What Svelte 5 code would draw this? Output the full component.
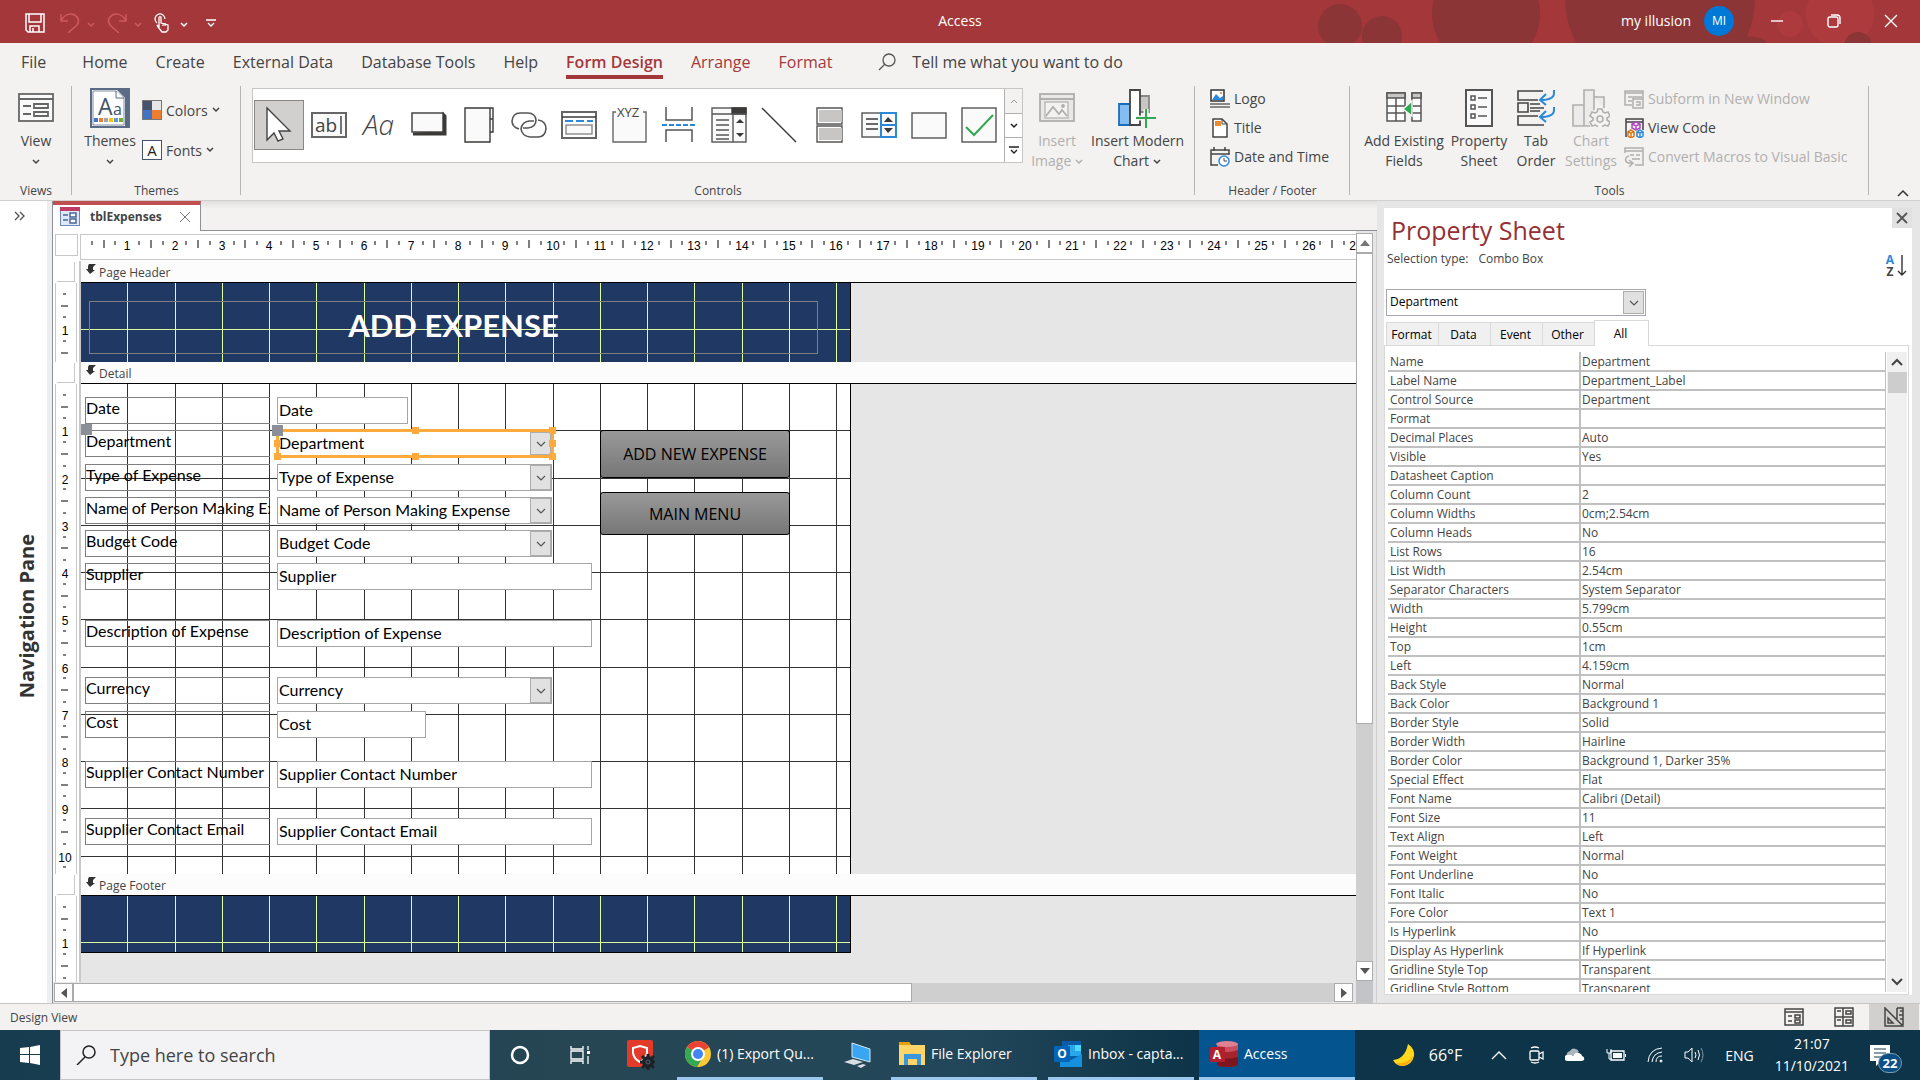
<script>
  // form designer scale: four centimetres take 189 pixels
  const cm = (n) => Math.round((n * 189) / 4) - 1;

  const menuTabs = ['Home', 'Create', 'External Data', 'Database Tools', 'Help'];
  const contextTabs = ['Form Design', 'Arrange', 'Format'];
  const gallery = [
    'select', 'textbox', 'label', 'button', 'tab', 'link', 'navigation', 'group',
    'pagebreak', 'combo', 'line', 'toggle', 'list', 'rect', 'check'
  ];

  const fields = [
    { name: 'Date', y: 13, w: 131 },
    { name: 'Department', y: 46, w: 276, combo: true, selected: true },
    { name: 'Type of Expense', y: 80, w: 275, combo: true },
    { name: 'Name of Person Making Expense', y: 113, w: 275, combo: true },
    { name: 'Budget Code', y: 146, w: 275, combo: true },
    { name: 'Supplier', y: 179, w: 315 },
    { name: 'Description of Expense', y: 236, w: 315 },
    { name: 'Currency', y: 293, w: 275, combo: true },
    { name: 'Cost', y: 327, w: 149 },
    { name: 'Supplier Contact Number', y: 377, w: 315 },
    { name: 'Supplier Contact Email', y: 434, w: 315 }
  ];

  const sheetTabs = ['Format', 'Data', 'Event', 'Other', 'All'];
  const properties = [
    ['Name', 'Department'],
    ['Label Name', 'Department_Label'],
    ['Control Source', 'Department'],
    ['Format', ''],
    ['Decimal Places', 'Auto'],
    ['Visible', 'Yes'],
    ['Datasheet Caption', ''],
    ['Column Count', '2'],
    ['Column Widths', '0cm;2.54cm'],
    ['Column Heads', 'No'],
    ['List Rows', '16'],
    ['List Width', '2.54cm'],
    ['Separator Characters', 'System Separator'],
    ['Width', '5.799cm'],
    ['Height', '0.55cm'],
    ['Top', '1cm'],
    ['Left', '4.159cm'],
    ['Back Style', 'Normal'],
    ['Back Color', 'Background 1'],
    ['Border Style', 'Solid'],
    ['Border Width', 'Hairline'],
    ['Border Color', 'Background 1, Darker 35%'],
    ['Special Effect', 'Flat'],
    ['Font Name', 'Calibri (Detail)'],
    ['Font Size', '11'],
    ['Text Align', 'Left'],
    ['Font Weight', 'Normal'],
    ['Font Underline', 'No'],
    ['Font Italic', 'No'],
    ['Fore Color', 'Text 1'],
    ['Is Hyperlink', 'No'],
    ['Display As Hyperlink', 'If Hyperlink'],
    ['Gridline Style Top', 'Transparent'],
    ['Gridline Style Bottom', 'Transparent']
  ];

  let activeTab = $state('All');

  const range = (n) => Array.from({ length: n }, (_, i) => i);
</script>

{#snippet chevron()}
  <svg class="chev" width="8" height="6" viewBox="0 0 8 6"><path d="M1 1l3 3 3-3" fill="none" stroke="currentColor" stroke-width="1.5" /></svg>
{/snippet}

{#snippet comboArrow()}
  <svg width="10" height="6" viewBox="0 0 10 6"><path d="M1 1l4 4 4-4" fill="none" stroke="#555" stroke-width="1.2" /></svg>
{/snippet}

{#snippet controlIcon(name)}
  <svg width="38" height="40" viewBox="0 0 38 40" fill="none" stroke="#3b3a39" stroke-width="1.4">
    {#if name === 'select'}
      <path d="M7 3v32l7-7 4 8 5-2-4-8h11z" fill="#fff" stroke="#444" />
    {:else if name === 'textbox'}
      <rect x="2" y="8" width="34" height="24" fill="#fafafa" stroke="#666" stroke-width="2" />
      <text x="5" y="27" class="glyph">ab</text><path d="M31 11v18" />
    {:else if name === 'label'}
      <text x="3" y="30" class="glyph italic">Aa</text>
    {:else if name === 'button'}
      <path d="M3 29h32V11l-1-1v18z" fill="#3b3a39" stroke-width="3" />
      <rect x="2" y="8" width="31" height="19" fill="#fafafa" />
    {:else if name === 'tab'}
      <path d="M5 3h28v24h-3v10H5zM30 3v24M30 14h3" fill="#fafafa" />
    {:else if name === 'link'}
      <g stroke="#555" stroke-width="1.6">
        <path d="M9 24q-7-2-7-8 1-8 8-8h8q7 0 8 7 0 7-8 8h-5" />
        <path d="M28 15q8 1 8 9-1 8-8 8h-8q-8-1-9-8 1-7 8-8h5" />
      </g>
    {:else if name === 'navigation'}
      <rect x="2" y="7" width="34" height="26" stroke="#666" stroke-width="2" />
      <path d="M2 12h34" /><path d="M5 16h28" stroke="#2b88d8" stroke-width="2" stroke-dasharray="8 3" />
      <rect x="6" y="20" width="26" height="9" stroke="#888" fill="#fafafa" />
    {:else if name === 'group'}
      <path d="M6 7H3v30h33V7h-3" stroke="#666" fill="#fafafa" />
      <text x="7" y="12" class="glyph small">XYZ</text>
    {:else if name === 'pagebreak'}
      <path d="M6 2v13h26V2M6 37V25h26v12" stroke="#555" stroke-width="1.5" />
      <path d="M2 20h34" stroke="#2b88d8" stroke-width="2" stroke-dasharray="5 2" />
    {:else if name === 'combo'}
      <rect x="2" y="3" width="34" height="34" fill="#fafafa" stroke="#555" />
      <path d="M22 3h14v6H22z" fill="#3b3a39" /><path d="M2 9h34M23 9v28M6 15h13M6 20h13M6 25h13M6 30h13M6 34h13" stroke="#555" />
      <path d="M26 18l4-4 4 4zM26 28l4 4 4-4z" fill="#3b3a39" stroke="none" />
    {:else if name === 'line'}
      <path d="M2 3l34 34" />
    {:else if name === 'toggle'}
      <path d="M7 3h25v16H7zM7 21h25v16H7z" fill="#fff" stroke="#555" /><path d="M9 5h23v12H9zM9 23h23v12H9z" fill="#c8c6c4" stroke="none" />
    {:else if name === 'list'}
      <rect x="2" y="8" width="34" height="24" fill="#fafafa" stroke="#555" />
      <path d="M6 14h12M6 19h12M6 24h12" /><path d="M21 8h15v24H21zM21 20h15" stroke="#2b88d8" stroke-width="2" />
      <path d="M24 17l4-5 5 5zM24 23l4 5 5-5z" fill="#3b3a39" stroke="none" />
    {:else if name === 'rect'}
      <rect x="2" y="8" width="34" height="25" fill="#fafafa" stroke="#555" />
    {:else if name === 'check'}
      <rect x="2" y="3" width="34" height="34" fill="#fafafa" stroke="#555" />
      <path d="M6 22l8 8 19-20" stroke="#31a952" stroke-width="2" />
    {/if}
  </svg>
{/snippet}

{#snippet hTicks()}
  <svg class="hticks" width="100%" height="24">
    {#each range(28) as i}
      <path d="M{cm(i + 0.25)} 6v4M{cm(i + 0.5)} 5v8M{cm(i + 0.75)} 6v4" stroke="#000" />
      {#if i > 0}<text x={cm(i)} y="15" text-anchor="middle">{i}</text>{/if}
    {/each}
  </svg>
{/snippet}

{#snippet vTicks(count)}
  <svg class="vticks" width="22" height="100%">
    {#each range(count) as i}
      <path d="M7 {cm(i + 0.25)}h3M5 {cm(i + 0.5)}h7M7 {cm(i + 0.75)}h3" stroke="#000" />
      {#if i > 0}<text x="9" y={cm(i) + 6} text-anchor="middle">{i}</text>{/if}
    {/each}
  </svg>
{/snippet}

{#snippet grid()}
  <svg class="grid" width="100%" height="100%" shape-rendering="crispEdges">
    {#each range(16) as i}
      <path d="M{cm(i + 1)} 0v600" stroke="currentColor" />
    {/each}
    {#each range(10) as i}
      <path d="M0 {cm(i + 1)}h900" stroke="currentColor" />
    {/each}
  </svg>
{/snippet}

{#snippet sectionBar(title)}
  <div class="bar">
    <div class="bar-gutter"><span class="bar-box"></span></div>
    <div class="bar-title">
      <svg width="10" height="10" viewBox="0 0 10 10"><path d="M3 0h7L7 3v3h2L4 10 0 5h2V2z" fill="#333" /></svg>
      {title}
    </div>
  </div>
{/snippet}

<div class="app">
  <header class="titlebar">
    <svg class="art" width="640" height="43" viewBox="0 0 640 43" aria-hidden="true">
      <g fill="#8b3537">
        <circle cx="60" cy="26" r="22" /><circle cx="102" cy="36" r="20" /><circle cx="206" cy="14" r="54" />
        <circle cx="380" cy="-2" r="95" /><ellipse cx="460" cy="42" rx="26" ry="6" />
      </g>
      <circle cx="560" cy="14" r="34" fill="#ad3a3d" /><circle cx="510" cy="24" r="13" fill="#ad3a3d" />
      <circle cx="578" cy="46" r="14" fill="#8b3537" />
    </svg>
    <div class="quick">
      <button class="q" aria-label="Save">
        <svg width="20" height="20" viewBox="0 0 20 20" fill="none" stroke="#fff" stroke-width="1.5"><path d="M1 1h18v18H3l-2-2zM4 1v8h12V1M5 19v-6h9v6M8 15v4" /></svg>
      </button>
      <button class="q dim" aria-label="Undo">
        <svg width="20" height="20" viewBox="0 0 20 20" fill="none" stroke="currentColor" stroke-width="1.5"><path d="M1 1v7h7M1 8c4-8 12-9 16-4 3 4 1 7-1 9l-8 7" /></svg>
      </button>
      <button class="q dim narrow" aria-label="Undo list">{@render chevron()}</button>
      <button class="q dim" aria-label="Redo">
        <svg width="20" height="20" viewBox="0 0 20 20" fill="none" stroke="currentColor" stroke-width="1.5"><path d="M19 1v7h-7M19 8C15 0 7-1 3 4c-3 4-1 7 1 9l8 7" /></svg>
      </button>
      <button class="q dim narrow" aria-label="Redo list">{@render chevron()}</button>
      <button class="q touch" aria-label="Touch mode">
        <svg width="16" height="20" viewBox="0 0 16 20" fill="none" stroke="#fff" stroke-width="1.3"><path d="M3 10a5 5 0 118-4M5 14V5q0-2 2-1v6l7 2v5l-2 2H8l-4-5-1-2zM9 10v3M11 10v3" /></svg>
      </button>
      <button class="q narrow" aria-label="Mode list">{@render chevron()}</button>
      <button class="q custom" aria-label="Customize toolbar">
        <svg width="10" height="8" viewBox="0 0 10 8" fill="none" stroke="#fff" stroke-width="1.3"><path d="M0 1h10M2 4l3 3 3-3" /></svg>
      </button>
    </div>
    <div class="app-name">Access</div>
    <div class="account">
      <span>my illusion</span>
      <span class="avatar">MI</span>
      <button class="win" aria-label="Minimize"><svg width="14" height="14" viewBox="0 0 14 14"><path d="M1 7h12" stroke="#fff" stroke-width="1.4" /></svg></button>
      <button class="win" aria-label="Restore"><svg width="14" height="14" viewBox="0 0 14 14" fill="none" stroke="#fff" stroke-width="1.4"><rect x="1" y="3" width="10" height="10" rx="2" /><path d="M4 1h6q3 0 3 3v6" /></svg></button>
      <button class="win" aria-label="Close"><svg width="14" height="14" viewBox="0 0 14 14"><path d="M1 1l12 12M13 1L1 13" stroke="#fff" stroke-width="1.4" /></svg></button>
    </div>
  </header>

  <nav class="menu">
    <button class="file"><span>File</span></button>
    {#each menuTabs as tab}
      <button><span>{tab}</span></button>
    {/each}
    {#each contextTabs as tab, i}
      <button class="context" class:active={i === 0}><span>{tab}</span></button>
    {/each}
    <label class="tell">
      <svg width="18" height="18" viewBox="0 0 18 18" fill="none" stroke="#555" stroke-width="1.3"><circle cx="11" cy="7" r="6" /><path d="M7 11l-6 6" /></svg>
      <input type="text" placeholder="Tell me what you want to do" aria-label="Tell me what you want to do" />
    </label>
  </nav>

  <div class="ribbon">
    <section class="group views">
      <div class="tools">
        <button class="big">
          <span class="pic"><svg width="36" height="30" viewBox="0 0 36 30" fill="none" stroke="#666" stroke-width="1.8"><rect x="1" y="1" width="34" height="27" fill="#fafafa" /><path d="M1 6h34M5 13h8M5 21h8" /><path d="M16 11h14v4H16zM16 19h14v4H16z" /></svg></span>
          View<br />{@render chevron()}
        </button>
      </div>
      <h2>Views</h2>
    </section>
    <section class="group themes">
      <div class="tools">
        <button class="big">
          <span class="pic">
            <svg width="40" height="40" viewBox="0 0 40 40"><rect x="1" y="1" width="38" height="38" fill="#fff" stroke="#5b6b84" stroke-width="2" /><path d="M27 2h11v36h-3V10z" fill="#5b6b84" /><path d="M3 3h23l8 7v27H3z" fill="#fff" stroke="#7f8ba0" /><path d="M26 3v7h8" fill="#fff" stroke="#5b6b84" />
              <text x="8" y="27" font-size="23" fill="#44546a">A</text><text x="23" y="27" font-size="16" fill="#44546a">a</text>
              <path d="M4 30h4v4H4z" fill="#4472c4" /><path d="M9 30h4v4H9z" fill="#ed7d31" /><path d="M14 30h4v4h-4z" fill="#a5a5a5" /><path d="M19 30h4v4h-4z" fill="#ffc000" /><path d="M24 30h4v4h-4z" fill="#5b9bd5" /><path d="M29 30h4v4h-4z" fill="#70ad47" /></svg>
          </span>
          Themes<br />{@render chevron()}
        </button>
        <div class="rows wide">
          <button>
            <svg width="20" height="20" viewBox="0 0 20 20"><path d="M0 0h20v20H0z" fill="#777" /><path d="M1 1h9v9H1z" fill="#44546a" /><path d="M10 1h9v9h-9z" fill="#e7e6e6" /><path d="M1 10h9v9H1z" fill="#4472c4" /><path d="M10 10h9v9h-9z" fill="#ed7d31" /></svg>
            Colors {@render chevron()}
          </button>
          <button>
            <svg width="20" height="20" viewBox="0 0 20 20"><rect x="0.5" y="0.5" width="19" height="19" fill="#fff" stroke="#44546a" /><text x="10" y="16" font-size="15" text-anchor="middle" fill="#222">A</text></svg>
            Fonts {@render chevron()}
          </button>
        </div>
      </div>
      <h2>Themes</h2>
    </section>
    <section class="group controls">
      <div class="tools">
        <div class="gallery">
          <div class="cells">
            {#each gallery as name}
              <button class:on={name === 'select'} aria-label={name}>{@render controlIcon(name)}</button>
            {/each}
          </div>
          <div class="scroller">
            <button class="off" aria-label="Row up"><svg width="8" height="6" viewBox="0 0 8 6"><path d="M1 5l3-3 3 3" fill="none" stroke="currentColor" /></svg></button>
            <button aria-label="Row down">{@render chevron()}</button>
            <button aria-label="More controls"><svg width="10" height="9" viewBox="0 0 10 9"><path d="M0 1h10M2 4l3 3 3-3" fill="none" stroke="currentColor" stroke-width="1.4" /></svg></button>
          </div>
        </div>
        <button class="big off image">
          <span class="pic"><svg width="36" height="30" viewBox="0 0 36 30" fill="none" stroke="#b1afad" stroke-width="1.8"><rect x="1" y="1" width="34" height="27" fill="#e8e8e8" /><path d="M1 6h34" /><rect x="6" y="9" width="23" height="16" fill="#f3f2f1" stroke-width="1.2" /><path d="M7 23l7-9 6 7 3-4 5 6" /><circle cx="24" cy="13" r="1" /></svg></span>
          Insert<br />Image {@render chevron()}
        </button>
        <button class="big chart">
          <span class="pic"><svg width="38" height="40" viewBox="0 0 38 40" fill="none" stroke-width="1.8"><path d="M1 16h11v21H1z" fill="#83bdf1" stroke="#1a6db8" /><path d="M21 8h10v16H21z" fill="#c8c6c4" stroke="#888" /><path d="M12 2h10v35H12z" fill="#fff" stroke="#444" /><path d="M28 21v19M18 30h20" stroke="#f3f2f1" stroke-width="5" /><path d="M28 21v19M18 30h20" stroke="#31a952" stroke-width="2" /></svg></span>
          Insert Modern<br />Chart {@render chevron()}
        </button>
      </div>
      <h2>Controls</h2>
    </section>
    <section class="group headfoot">
      <div class="tools">
        <div class="rows">
          <button><svg width="20" height="20" viewBox="0 0 20 20"><path d="M1 1h13v11H1z" fill="#fff" stroke="#333" stroke-width="1.5" /><path d="M2 11l4-6 4 4 3-2v4z" fill="#2b88d8" /><circle cx="11" cy="4" r="1" fill="#ed7d31" /><path d="M0 15h20M0 18h20" stroke="#666" stroke-width="1.5" /></svg>Logo</button>
          <button><svg width="20" height="20" viewBox="0 0 20 20"><path d="M3 1h9l5 5v13H3z" fill="#fff" stroke="#444" stroke-width="1.5" /><path d="M12 1v5h5" fill="none" stroke="#444" /><path d="M5 3h6v5H5z" fill="#ed8b31" /></svg>Title</button>
          <button><svg width="20" height="20" viewBox="0 0 20 20" fill="none"><path d="M8 18H1V3h18v5M1 7h18M4 0v4M15 0v4" stroke="#444" stroke-width="1.5" /><circle cx="14" cy="14" r="5" fill="#fff" stroke="#2b88d8" stroke-width="1.5" /><path d="M14 11v3h3" stroke="#444" /></svg>Date and Time</button>
        </div>
      </div>
      <h2>Header / Footer</h2>
    </section>
    <section class="group toolset">
      <div class="tools">
        <button class="big existing">
          <span class="pic"><svg width="36" height="36" viewBox="0 0 36 36" fill="none" stroke="#555" stroke-width="1.5"><path d="M1 3h18v28H1zM26 3h9v28h-9z" fill="#fff" /><path d="M1 3h18v5H1zM26 3h9v5h-9z" fill="#c8c6c4" /><path d="M1 16h18M1 23h18M10 8v23M26 16h9M26 23h9" /><path d="M26 11v15l-9-7z" fill="#31a952" stroke="#f3f2f1" /></svg></span>
          Add Existing<br />Fields
        </button>
        <button class="big sheet-btn">
          <span class="pic"><svg width="28" height="38" viewBox="0 0 28 38" fill="none" stroke="#555" stroke-width="1.5"><path d="M1 1h26v36H1z" fill="#fafafa" stroke-width="2" /><path d="M6 7h4v4H6zM6 16h4v4H6zM6 25h4v4H6zM13 9h9M13 18h9M13 27h9" /></svg></span>
          Property<br />Sheet
        </button>
        <button class="big order">
          <span class="pic"><svg width="38" height="38" viewBox="0 0 38 38" fill="none" stroke="#444" stroke-width="1.6"><path d="M26 2H1v9h20M27 36H1v-9h20M1 14h10v9H1zM13 15h10M13 19h14M13 22h10" /><path d="M37 1v3q0 7-14 7M29 5l-6 6 6 5M37 18v3q0 7-14 7M29 22l-6 6 6 5" stroke="#2b88d8" stroke-width="2" /></svg></span>
          Tab<br />Order
        </button>
        <button class="big off settings">
          <span class="pic"><svg width="38" height="38" viewBox="0 0 38 38" fill="none" stroke="#b1afad" stroke-width="1.6"><path d="M18 37H1V16h11M12 37V1h10v20M22 8h10v11" fill="#eceaea" /><path d="M26 20h4l1 3 2 1 3-1 2 4-3 2v2l3 2-2 4-3-1-2 1-1 2h-4l-1-2-2-1-3 1-2-4 3-2v-2l-3-2 2-4 3 1 2-1z" fill="#f3f2f1" /><circle cx="28" cy="30" r="3" /></svg></span>
          Chart<br />Settings
        </button>
        <div class="rows">
          <button class="off"><svg width="20" height="20" viewBox="0 0 20 20" fill="none" stroke="#b1afad" stroke-width="1.5"><path d="M8 16H1V2h18v5M1 4h18M4 8h4M4 12h4M9 8h10v11H9zM9 10h10M12 13h4v3h-4" /></svg>Subform in New Window</button>
          <button><svg width="20" height="20" viewBox="0 0 20 20" fill="none" stroke-width="1.5"><path d="M2 19V1h17v11M2 4h17" stroke="#444" /><path d="M12 4l4 2v4l-4 2-4-2V6zM8 6l4 2 4-2M12 8v4" stroke="#b146c2" fill="#fff" /><path d="M7 12l3 2v4l-3 2-3-2v-4zM4 14l3 1 3-1M7 15v5" stroke="#e07516" fill="#fff" /><path d="M16 12l3 2v4l-3 2-3-2v-4zM13 14l3 1 3-1M16 15v5" stroke="#2b88d8" fill="#fff" /></svg>View Code</button>
          <button class="off"><svg width="20" height="20" viewBox="0 0 20 20" fill="none" stroke="#b1afad" stroke-width="1.5"><path d="M1 6V1h18v17h-8M1 4h18M6 8h4M12 8h4M8 12h8M5 9c-5 1-5 8 3 7M5 13l4 3-4 4" /></svg>Convert Macros to Visual Basic</button>
        </div>
      </div>
      <h2>Tools</h2>
    </section>
    <button class="collapse" aria-label="Collapse ribbon"><svg width="12" height="8" viewBox="0 0 12 8"><path d="M1 7l5-5 5 5" fill="none" stroke="#333" stroke-width="1.5" /></svg></button>
  </div>

  <div class="work">
    <aside class="navpane">
      <button aria-label="Open navigation pane"><svg width="12" height="10" viewBox="0 0 12 10" fill="none" stroke="#555" stroke-width="1.4"><path d="M1 1l4 4-4 4M6 1l4 4-4 4" /></svg></button>
      <span>Navigation Pane</span>
    </aside>

    <main class="doc">
      <div class="doc-tabs">
        <div class="doc-tab">
          <svg width="20" height="19" viewBox="0 0 20 19"><path d="M0 0h20v19H0z" fill="#7088b8" /><path d="M1 4h18v14H1z" fill="#dfe8f6" /><path d="M0 0h20v4H0z" fill="#c23b63" /><path d="M3 8h5M3 13h5" stroke="#4a659b" stroke-width="1.5" /><path d="M10 6h6v4h-6zM10 12h6v4h-6z" fill="#fff" stroke="#4a659b" stroke-width="1.5" /></svg>
          <b>tblExpenses</b>
          <button aria-label="Close tblExpenses"><svg width="12" height="12" viewBox="0 0 12 12"><path d="M1 1l10 10M11 1L1 11" stroke="#777" /></svg></button>
        </div>
      </div>
      <div class="design">
        <div class="surface">
          <div class="hruler"><span class="corner"></span><div class="strip">{@render hTicks()}</div></div>
          <div class="sections">
            {@render sectionBar('Page Header')}
            <div class="section">
              <div class="gutter">{@render vTicks(2)}</div>
              <div class="sheet navy head">
                {@render grid()}
                <h1 class="form-title">ADD EXPENSE</h1>
              </div>
            </div>
            {@render sectionBar('Detail')}
            <div class="section">
              <div class="gutter">{@render vTicks(11)}</div>
              <div class="sheet detail">
                {@render grid()}
                {#each fields as f, i}
                  <label class="caption" for="f{i}" style="top: {f.y}px">{f.name}</label>
                  <div class="field" class:selected={f.selected} style="top: {f.y}px; width: {f.w}px">
                    {#if f.combo}
                      <select id="f{i}"><option>{f.name}</option></select>
                      <span class="drop">{@render comboArrow()}</span>
                    {:else}
                      <input id="f{i}" type="text" value={f.name} />
                    {/if}
                    {#if f.selected}
                      <i class="grip nw"></i><i class="grip n"></i><i class="grip ne"></i><i class="grip e"></i>
                      <i class="grip se"></i><i class="grip s"></i><i class="grip sw"></i><i class="grip w"></i>
                    {/if}
                  </div>
                {/each}
                <i class="mover"></i>
                <button class="command add">ADD NEW EXPENSE</button>
                <button class="command main">MAIN MENU</button>
              </div>
            </div>
            {@render sectionBar('Page Footer')}
            <div class="section last">
              <div class="gutter">{@render vTicks(2)}</div>
              <div class="sheet navy foot">{@render grid()}</div>
            </div>
          </div>
          <div class="hscroll">
            <button aria-label="Scroll left"><svg width="6" height="10" viewBox="0 0 6 10"><path d="M6 0v10L0 5z" fill="#555" /></svg></button>
            <div class="track"><div class="thumb"></div></div>
            <button aria-label="Scroll right"><svg width="6" height="10" viewBox="0 0 6 10"><path d="M0 0v10l6-5z" fill="#555" /></svg></button>
          </div>
        </div>
        <div class="vscroll">
          <button aria-label="Scroll up"><svg width="10" height="6" viewBox="0 0 10 6"><path d="M0 6h10L5 0z" fill="#777" /></svg></button>
          <div class="track"><div class="thumb"></div></div>
          <button aria-label="Scroll down"><svg width="10" height="6" viewBox="0 0 10 6"><path d="M0 0h10L5 6z" fill="#555" /></svg></button>
          <span class="end"></span>
        </div>
      </div>
    </main>

    <aside class="props">
      <div class="panel">
        <div class="props-head">
          <h2>Property Sheet</h2>
          <button class="close" aria-label="Close property sheet"><svg width="12" height="12" viewBox="0 0 12 12"><path d="M1 1l10 10M11 1L1 11" stroke="#555" stroke-width="1.8" /></svg></button>
        </div>
        <div class="props-type">
          <p>Selection type: <span>Combo Box</span></p>
          <button class="sort" aria-label="Sort">
            <b><span>A</span><span>Z</span></b>
            <svg width="10" height="22" viewBox="0 0 10 22"><path d="M5 0v20M1 16l4 4 4-4" fill="none" stroke="#333" stroke-width="1.4" /></svg>
          </button>
        </div>
        <div class="picker">
          <select aria-label="Selected control"><option>Department</option></select>
          <span class="drop">{@render comboArrow()}</span>
        </div>
        <div class="props-tabs">
          {#each sheetTabs as tab}
            <button class:active={activeTab === tab} onclick={() => (activeTab = tab)}>{tab}</button>
          {/each}
        </div>
        <div class="props-body">
          <div class="table-wrap">
            <table>
              <tbody>
                {#each properties as [name, value]}
                  <tr><th scope="row">{name}</th><td>{value}</td></tr>
                {/each}
              </tbody>
            </table>
          </div>
          <div class="bar-v">
            <svg width="12" height="8" viewBox="0 0 12 8"><path d="M1 7l5-5 5 5" fill="none" stroke="#444" stroke-width="2" /></svg>
            <span></span>
            <svg class="down" width="12" height="8" viewBox="0 0 12 8"><path d="M1 1l5 5 5-5" fill="none" stroke="#444" stroke-width="2" /></svg>
          </div>
        </div>
      </div>
    </aside>
  </div>

  <div class="status">
    <span>Design View</span>
    <div class="modes">
      <button aria-label="Form View"><svg width="20" height="20" viewBox="0 0 20 20" fill="none" stroke="#444" stroke-width="1.5"><path d="M1 2h18v16H1zM1 5h18M4 9h4M4 14h4M11 8h5v3h-5zM11 13h5v3h-5z" /></svg></button>
      <button aria-label="Layout View"><svg width="20" height="20" viewBox="0 0 20 20" fill="none" stroke="#444" stroke-width="1.5"><path d="M1 1h18v18H1zM9 1v18M1 10h18M3 4h4M3 13h4M12 4h5v3h-5zM12 13h5v3h-5z" /></svg></button>
      <button class="on" aria-label="Design View"><svg width="20" height="20" viewBox="0 0 20 20" fill="none" stroke="#444" stroke-width="1.5"><path d="M1 1v18h18zM4 11v5h5zM13 1h6v17M13 1v11M16 4h3M15 8h4M16 12h3" /></svg></button>
    </div>
  </div>

  <footer class="taskbar">
    <button class="start" aria-label="Start"><svg width="20" height="20" viewBox="0 0 20 20" fill="#fff"><path d="M0 3l9-1v7H0zM10 2l10-2v9H10zM0 10h9v8l-9-1zM10 10h10v10l-10-2z" /></svg></button>
    <label class="search">
      <svg width="20" height="20" viewBox="0 0 20 20" fill="none" stroke="#222" stroke-width="1.5"><circle cx="13" cy="7" r="6" /><path d="M9 12l-8 8" /></svg>
      <input type="text" placeholder="Type here to search" aria-label="Type here to search" />
    </label>
    <button class="pin" aria-label="Cortana"><svg width="20" height="20" viewBox="0 0 20 20"><circle cx="10" cy="10" r="8" fill="none" stroke="#fff" stroke-width="2.5" /></svg></button>
    <button class="pin" aria-label="Task View"><svg width="20" height="20" viewBox="0 0 20 20" fill="none" stroke="#fff" stroke-width="1.3"><path d="M1 1v3h12V1M1 19v-3h12v3M1 6h12v8H1zM18 1v4M18 11v8" /><path d="M17 6h3v3h-3z" fill="#fff" stroke="none" /></svg></button>
    <button class="pin" aria-label="Security"><svg width="30" height="30" viewBox="0 0 30 30"><rect x="2" y="0" width="26" height="27" rx="2" fill="#e33a2a" /><path d="M8 8l7-2 7 2v5q-1 6-7 9-6-3-7-9z" fill="none" stroke="#fff" stroke-width="2" /><path d="M23 14v16M15 22h15M17 16l12 12M29 16L17 28" stroke="#1c2328" stroke-width="3" /><circle cx="23" cy="22" r="6" fill="#1c2328" /><circle cx="23" cy="22" r="2" fill="none" stroke="#4f6470" /></svg></button>
    <button class="task">
      <svg width="28" height="28" viewBox="0 0 28 28"><circle cx="14" cy="14" r="13" fill="#fcc934" /><path d="M14 14L3 7A13 13 0 0125 7z" fill="#ea4335" /><path d="M25 7H14v7z" fill="#ea4335" /><path d="M3 7a13 13 0 0010 20l6-10-5-3z" fill="#34a853" /><circle cx="14" cy="14" r="7" fill="#fff" /><circle cx="14" cy="14" r="5" fill="#4285f4" /></svg>
      (1) Export Qu...
    </button>
    <button class="pin pc" aria-label="Remote desktop"><svg width="28" height="26" viewBox="0 0 28 26"><path d="M9 1l18 6v13L9 15z" fill="#3aa5f0" stroke="#cfe8fa" /><path d="M1 20l9-3 10 3-9 3zM14 24l6-2 3 1-5 3z" fill="#d8dde1" /></svg></button>
    <button class="task">
      <svg width="28" height="26" viewBox="0 0 28 26"><path d="M1 1h10l2 3h14v20H1z" fill="#ffd667" /><path d="M1 1h10l2 3H1z" fill="#e5a100" /><path d="M6 24V13h17v11h-4v-6h-9v6z" fill="#3a96dd" /></svg>
      File Explorer
    </button>
    <button class="task outlook">
      <svg width="30" height="28" viewBox="0 0 30 28"><path d="M9 1h19v20H9z" fill="#0a5ba8" /><path d="M15 5h13v11H15z" fill="#28a8ea" /><path d="M22 5h6v6h-6z" fill="#50d9ff" /><path d="M7 14l11 6 11-6v13H7z" fill="#1490df" /><rect x="1" y="6" width="16" height="16" rx="1" fill="#0364b8" /><text x="9" y="18" font-size="12" font-weight="700" fill="#fff" text-anchor="middle">O</text></svg>
      Inbox - capta...
    </button>
    <button class="task current">
      <svg width="30" height="28" viewBox="0 0 30 28"><path d="M8 4v20q0 3 10 3t11-3V4z" fill="#a4262c" /><path d="M8 17q10 3 21 0v7q-1 3-11 3T8 24z" fill="#7d1520" /><path d="M8 4v6q10 4 21 0V4z" fill="#c94f60" /><ellipse cx="18" cy="4" rx="11" ry="3" fill="#e08090" /><rect x="1" y="7" width="15" height="15" rx="1" fill="#b0202e" /><text x="8" y="19" font-size="12" font-weight="700" fill="#fff" text-anchor="middle">A</text></svg>
      Access
    </button>
    <div class="tray">
      <svg width="24" height="24" viewBox="0 0 24 24"><path d="M16 1q7 5 6 12-2 9-11 10Q4 23 1 17q12-1 15-16z" fill="#ffd91a" /><path d="M4 20q12 2 17-8-1 9-10 11-4 0-7-3z" fill="#ffa914" /></svg>
      <span class="temp">66°F</span>
      <svg width="16" height="10" viewBox="0 0 16 10"><path d="M1 9l7-7 7 7" fill="none" stroke="#fff" stroke-width="1.4" /></svg>
      <svg width="16" height="18" viewBox="0 0 16 18" fill="none" stroke="#fff" stroke-width="1.3"><rect x="2" y="5" width="9" height="9" rx="1" /><path d="M11 8l4-2v7l-4-2M3 2q4-2 8 0M3 16q4 2 8 0" /></svg>
      <svg width="20" height="14" viewBox="0 0 20 14"><path d="M3 10a4 4 0 012-7 5 5 0 019 1z" fill="#a9b6bd" /><path d="M2 13a3 3 0 011-6q3-1 5 1 2-4 6-3 3 1 3 3 3 1 2 4l-2 1z" fill="#fff" /></svg>
      <svg width="20" height="14" viewBox="0 0 20 14"><path d="M5 3h13v9H5z" fill="none" stroke="#fff" stroke-width="1.3" /><path d="M7 5h9v5H7zM19 6h1v3h-1z" fill="#fff" /><path d="M1 1v4h4V1M3 5v6h3" fill="none" stroke="#fff" /></svg>
      <svg width="16" height="16" viewBox="0 0 16 16" fill="none" stroke="#fff"><path d="M1 15Q2 2 15 1M5 15q1-9 10-10M9 15q0-6 6-6" /><circle cx="14" cy="14" r="1" fill="#fff" /></svg>
      <svg width="20" height="16" viewBox="0 0 20 16" fill="none" stroke="#fff"><path d="M1 5h3l4-4v14l-4-4H1zM11 5q2 3 0 6M14 3q3 5 0 10" /><path d="M17 1q4 7 0 14" stroke="#8297a2" /></svg>
      <span class="lang">ENG</span>
      <span class="clock">21:07<br />11/10/2021</span>
      <span class="notes">
        <svg width="22" height="22" viewBox="0 0 22 22"><path d="M0 1h20v16H11l-5 5v-5H0z" fill="#fff" /><path d="M4 5h12M4 9h12M4 13h8" stroke="#12374b" /></svg>
        <b>22</b>
      </span>
    </div>
  </footer>
</div>

<style>
  :global(body) {
    margin: 0;
  }

  .app {
    display: flex;
    flex-direction: column;
    height: 100vh;
    overflow: hidden;
    font-family: 'Open Sans', 'Noto Sans', sans-serif;
    font-size: 14px;
    color: #444;
    background: #f3f2f1;
  }

  .app * {
    box-sizing: border-box;
  }

  button,
  input,
  select {
    font: inherit;
    color: inherit;
    border: 0;
    padding: 0;
    margin: 0;
    background: none;
    border-radius: 0;
  }

  select {
    appearance: none;
  }

  svg {
    display: block;
    flex: none;
  }

  h1,
  h2,
  p {
    margin: 0;
  }

  /* title bar */
  .titlebar {
    position: relative;
    display: grid;
    grid-template-columns: 1fr auto 1fr;
    align-items: center;
    height: 43px;
    flex: none;
    padding-bottom: 2px;
    background: #a4373a;
    color: #fff;
  }

  .art {
    position: absolute;
    right: 0;
    top: 0;
  }

  .quick,
  .account {
    position: relative;
    display: flex;
    align-items: center;
  }

  .quick {
    padding: 5px 0 0 25px;
  }

  .q {
    margin-right: 15px;
  }

  .q.dim {
    margin-right: 7px;
    color: #cf5a5c;
  }

  .q.narrow {
    margin-right: 12px;
  }

  .q.touch {
    margin-right: 10px;
  }

  .custom {
    margin-left: 6px;
  }

  .account {
    justify-content: flex-end;
    padding-right: 22px;
  }

  .avatar {
    width: 30px;
    height: 30px;
    margin: 0 36px 0 13px;
    border-radius: 50%;
    background: #0078d7;
    font-size: 12px;
    line-height: 30px;
    text-align: center;
  }

  .win + .win {
    margin-left: 43px;
  }

  /* menu */
  .menu {
    display: flex;
    align-items: flex-start;
    height: 40px;
    flex: none;
    padding: 6px 0 0 7px;
    font-size: 16px;
  }

  .menu button {
    padding: 0 14px;
  }

  .menu .file {
    margin-right: 8px;
  }

  .menu span {
    display: block;
    line-height: 26px;
    border-bottom: 4px solid transparent;
  }

  .context {
    color: #a4373a;
  }

  .menu .active span {
    font-weight: 600;
    border-color: #a4373a;
  }

  .tell {
    display: flex;
    align-items: center;
    gap: 16px;
    height: 26px;
    margin-left: 32px;
  }

  .tell input {
    width: 240px;
  }

  input::placeholder {
    color: #444;
    opacity: 1;
  }

  /* ribbon */
  .ribbon {
    display: flex;
    height: 118px;
    flex: none;
    padding-bottom: 3px;
    border-bottom: 1px solid #d2d0ce;
  }

  .group {
    display: flex;
    flex-direction: column;
    position: relative;
    flex: none;
  }

  .group::after {
    content: '';
    position: absolute;
    right: 0;
    top: 3px;
    bottom: 2px;
    border-right: 1px solid #b8b6b4;
  }

  .group h2 {
    font-size: 12px;
    font-weight: 400;
    line-height: 12px;
    text-align: center;
  }

  .tools {
    display: flex;
    flex: 1;
    align-items: flex-start;
  }

  .views {
    width: 72px;
  }

  .themes {
    width: 169px;
  }

  .controls {
    flex: 1;
    min-width: 0;
  }

  .headfoot {
    width: 155px;
  }

  .toolset {
    width: 519px;
  }

  .big {
    padding-top: 5px;
    line-height: 20px;
    text-align: center;
    white-space: nowrap;
  }

  .views .big {
    width: 72px;
  }

  .themes .big {
    width: 58px;
    margin-left: 9px;
  }

  .pic {
    display: flex;
    align-items: center;
    justify-content: center;
    height: 40px;
    margin-bottom: 3px;
  }

  .chev {
    display: inline-block;
    vertical-align: middle;
  }

  .off {
    color: #b1afad;
  }

  .rows {
    display: flex;
    flex-direction: column;
    padding-top: 1px;
  }

  .rows button {
    display: flex;
    align-items: center;
    gap: 4px;
    height: 29px;
    white-space: nowrap;
  }

  .rows.wide {
    padding: 7px 0 0 3px;
  }

  .rows.wide button {
    height: 40px;
  }

  .headfoot .rows {
    padding-left: 15px;
  }

  .gallery {
    display: flex;
    flex: 1;
    height: 75px;
    margin: 5px 0 0 11px;
    background: #fff;
    border: 1px solid #c8c6c4;
  }

  .cells {
    display: flex;
    flex: 1;
    align-items: flex-start;
    padding: 11px 0 0 1px;
  }

  .cells button {
    display: grid;
    place-items: center;
    width: 50px;
    height: 50px;
  }

  .cells .on {
    background: #d2d0ce;
    border: 1px solid #8a8886;
  }

  .glyph {
    font-size: 19px;
    fill: #444;
    stroke: none;
  }

  .glyph.italic {
    font-size: 28px;
    font-style: italic;
    font-weight: 300;
  }

  .glyph.small {
    font-size: 13px;
  }

  .scroller {
    display: flex;
    flex-direction: column;
    width: 18px;
  }

  .scroller button {
    display: grid;
    place-items: center;
    flex: 1;
    border-left: 1px solid #b1afad;
    background: #fff;
    color: #222;
  }

  .scroller button + button {
    border-top: 1px solid #b1afad;
  }

  .scroller .off {
    background: #f3f2f1;
    color: #999;
  }

  .image {
    width: 68px;
  }

  .chart {
    width: 92px;
    margin-right: 12px;
  }

  .existing {
    width: 84px;
    margin-left: 12px;
  }

  .sheet-btn {
    width: 66px;
  }

  .order {
    width: 48px;
  }

  .settings {
    width: 62px;
    margin-right: 2px;
  }

  .collapse {
    align-self: flex-end;
    margin-left: 28px;
    margin-right: 11px;
  }

  /* work area */
  .work {
    display: flex;
    flex: 1;
    min-height: 0;
    background: #e6e6e6;
  }

  .navpane {
    display: flex;
    flex-direction: column;
    align-items: center;
    width: 52px;
    padding: 10px 0 0 7px;
    background: #fff;
    border-right: 5px solid #eceef0;
  }

  .navpane button {
    align-self: flex-start;
    margin-left: 7px;
  }

  .navpane span {
    margin: auto 0;
    padding-bottom: 8px;
    writing-mode: vertical-rl;
    transform: rotate(180deg);
    font-size: 20px;
    font-weight: 700;
    line-height: 24px;
    color: #333;
  }

  .doc {
    display: flex;
    flex-direction: column;
    flex: 1;
    min-width: 0;
    border-left: 1px solid #8e9099;
  }

  .doc-tabs {
    height: 30px;
    flex: none;
    background: linear-gradient(#e1dfdd, #f3f2f1 8px);
    border-bottom: 1px solid #8e9099;
  }

  .doc-tab {
    display: flex;
    align-items: center;
    gap: 10px;
    width: 148px;
    height: 30px;
    padding: 0 9px 3px 7px;
    background: #fff;
    border-top: 4px solid #c0504f;
    border-right: 1px solid #8e9099;
    font-size: 12px;
  }

  .doc-tab b {
    flex: 1;
  }

  .design {
    display: flex;
    flex: 1;
    min-height: 0;
  }

  .surface {
    display: flex;
    flex-direction: column;
    flex: 1;
    min-width: 0;
  }

  .hruler {
    display: flex;
    height: 30px;
    flex: none;
    padding: 3px 0 0 2px;
    background: #fff;
  }

  .corner {
    width: 23px;
    height: 22px;
    border: 1px solid #c8c8c8;
    margin-right: 2px;
  }

  .strip {
    flex: 1;
    min-width: 0;
    height: 26px;
    border: 1px solid #c8c8c8;
    border-right: 0;
  }

  .hticks,
  .vticks {
    font-family: 'Liberation Sans', sans-serif;
    font-size: 12px;
    overflow: hidden;
  }

  .sections {
    display: flex;
    flex-direction: column;
    flex: 1;
    min-height: 0;
    overflow: hidden;
  }

  .bar {
    display: flex;
    height: 22px;
    flex: none;
  }

  .bar-gutter,
  .gutter {
    width: 28px;
    flex: none;
    padding-left: 2px;
    background: #fff;
    border-right: 2px solid #c8c8c8;
  }

  .bar-gutter {
    padding: 1px 4px 0;
  }

  .bar-box {
    display: block;
    height: 20px;
    border: solid #c8c8c8;
    border-width: 0 1px 1px 0;
  }

  .bar-title {
    display: flex;
    gap: 3px;
    flex: 1;
    padding: 3px 0 0 5px;
    background: #fcfcfc;
    border-bottom: 1px solid #000;
    font-size: 12px;
    line-height: 18px;
  }

  .section {
    display: flex;
    flex: none;
  }

  .gutter {
    position: relative;
  }

  .vticks {
    position: absolute;
    left: 2px;
    top: 0;
    border: solid #c8c8c8;
    border-width: 0 1px;
  }

  .sheet {
    position: relative;
    width: 770px;
    border-right: 1px solid #000;
  }

  .grid {
    position: absolute;
    left: 0;
    top: 0;
    color: #333;
  }

  .navy {
    background: #203864;
  }

  .navy .grid {
    color: #dfff9c;
  }

  .head {
    height: 79px;
  }

  .detail {
    height: 490px;
    background: #fff;
  }

  .foot {
    height: 57px;
    border-bottom: 1px solid #000;
  }

  .section.last {
    flex: 1;
  }

  .form-title {
    position: absolute;
    left: 8px;
    top: 18px;
    width: 729px;
    height: 53px;
    border: 1px solid #7f7f7f;
    color: #fff;
    font-family: Lato, 'Open Sans', sans-serif;
    font-size: 31px;
    font-weight: 700;
    line-height: 46px;
    text-align: center;
  }

  .caption,
  .field {
    position: absolute;
    height: 27px;
    color: #000;
    font-family: Lato, 'Open Sans', sans-serif;
    font-size: 16px;
    line-height: 20px;
    white-space: nowrap;
  }

  .caption {
    left: 4px;
    width: 185px;
    border: solid #7f7f7f;
    border-width: 1px 0 1px 1px;
    overflow: hidden;
  }

  .field {
    left: 196px;
    background: #fff;
    border: 1px solid #a6a6a6;
  }

  .field input,
  .field select {
    display: block;
    width: 100%;
    height: 23px;
    padding: 0 0 0 1px;
    line-height: 23px;
  }

  .drop {
    position: absolute;
    right: 0;
    top: 0;
    bottom: 0;
    display: grid;
    place-items: center;
    width: 21px;
    background: #e1e1e1;
    border: 1px solid #adadad;
    pointer-events: none;
  }

  .field.selected {
    border-color: #ffaa3c;
    box-shadow: 0 0 0 1px #ffaa3c, inset 0 0 0 1px #ffaa3c;
  }

  .selected .drop {
    margin: 1px;
  }

  .grip {
    position: absolute;
    width: 7px;
    height: 7px;
    background: #ffaa3c;
  }

  .nw, .n, .ne { top: -4px; }
  .sw, .s, .se { bottom: -4px; }
  .e, .w { top: 9px; }
  .nw, .w, .sw { left: -4px; }
  .ne, .e, .se { right: -4px; }
  .n, .s { left: 134px; }

  .grip.nw,
  .mover {
    width: 11px;
    height: 11px;
    background: #8b8f98;
  }

  .grip.nw {
    left: -6px;
    top: -6px;
  }

  .mover {
    position: absolute;
    left: 0;
    top: 40px;
  }

  .command {
    position: absolute;
    left: 519px;
    width: 190px;
    color: #000;
    border: 1px solid #000;
    border-radius: 3px;
    background: linear-gradient(#999, #777);
    font-size: 16px;
  }

  .add {
    top: 46px;
    height: 48px;
  }

  .main {
    top: 108px;
    height: 43px;
  }

  /* scroll bars */
  .hscroll {
    display: flex;
    height: 21px;
    flex: none;
    padding: 1px 3px 1px 1px;
    background: #e6e6e6;
  }

  .hscroll button,
  .vscroll button,
  .thumb {
    display: grid;
    place-items: center;
    background: #fff;
    border: 1px solid #ababab;
  }

  .hscroll button {
    width: 19px;
  }

  .track {
    flex: 1;
    background: #cfcfcf;
  }

  .hscroll .thumb {
    width: 66.5%;
    height: 100%;
  }

  .vscroll {
    display: flex;
    flex-direction: column;
    width: 21px;
    flex: none;
    padding: 2px 3px 0 0;
    border-right: 1px solid #d0d0d0;
  }

  .vscroll button {
    height: 20px;
  }

  .vscroll .thumb {
    width: 100%;
    height: 66.5%;
  }

  .end {
    height: 22px;
    background: #c3c4c8;
  }

  /* property sheet */
  .props {
    display: flex;
    width: 543px;
    flex: none;
    padding: 7px 8px 8px 7px;
  }

  .panel {
    display: flex;
    flex-direction: column;
    flex: 1;
    min-width: 0;
    background: #fff;
  }

  .props-head {
    display: flex;
    justify-content: space-between;
    height: 40px;
    flex: none;
  }

  .props-head h2 {
    padding-left: 7px;
    color: #953034;
    font-size: 25px;
    font-weight: 400;
    line-height: 45px;
  }

  .close {
    display: grid;
    place-items: center;
    width: 20px;
    height: 20px;
    background: #e1e1e1;
  }

  .props-type {
    display: flex;
    justify-content: space-between;
    align-items: flex-start;
    height: 41px;
    flex: none;
    padding: 3px 5px 0 3px;
    font-size: 12px;
    line-height: 16px;
  }

  .props-type p span {
    padding-left: 7px;
  }

  .sort {
    display: flex;
    align-items: center;
    gap: 3px;
    margin-top: 3px;
  }

  .sort b {
    display: flex;
    flex-direction: column;
    line-height: 12px;
  }

  .sort span:first-child {
    color: #2b88d8;
  }

  .picker {
    position: relative;
    width: 260px;
    height: 27px;
    flex: none;
    margin-left: 2px;
    border: 1px solid #a6a6ae;
    color: #000;
    font-size: 12px;
  }

  .picker select {
    display: block;
    width: 100%;
    height: 23px;
    padding-left: 3px;
  }

  .picker .drop {
    margin: 1px;
  }

  .props-tabs {
    display: flex;
    align-items: flex-end;
    height: 29px;
    flex: none;
    padding-left: 2px;
    color: #000;
    font-size: 12px;
  }

  .props-tabs button {
    width: 52px;
    height: 23px;
    padding-right: 2px;
    background: #f0f0f0;
    border: solid #d9d9d9;
    border-width: 1px 0 0 1px;
  }

  .props-tabs .active {
    position: relative;
    width: 55px;
    height: 26px;
    margin-bottom: -1px;
    background: #fff;
    border-right-width: 1px;
  }

  .props-body {
    display: flex;
    flex: 1;
    min-height: 0;
    margin-right: 3px;
    padding: 6px 1px 2px 3px;
    border: 1px solid #d9d9d9;
  }

  .table-wrap {
    flex: 1;
    overflow: hidden;
  }

  table {
    width: 100%;
    border-collapse: collapse;
    table-layout: fixed;
    font-size: 12px;
    line-height: 17px;
  }

  th,
  td {
    height: 19px;
    padding: 0 2px;
    border-bottom: 2px solid #c0c0c0;
    font-weight: 400;
    text-align: left;
    white-space: nowrap;
  }

  th {
    width: 192px;
    border-right: 2px solid #c0c0c0;
  }

  td {
    padding-left: 1px;
    border-right: 1px solid #c0c0c0;
  }

  .bar-v {
    display: flex;
    flex-direction: column;
    align-items: center;
    width: 20px;
    margin-left: 1px;
    padding: 6px 0;
    background: #f0f0f0;
  }

  .bar-v span {
    width: 19px;
    height: 21px;
    margin-top: 6px;
    background: #cdcdcd;
  }

  .down {
    margin-top: auto;
  }

  /* status bar */
  .status {
    display: flex;
    justify-content: space-between;
    align-items: center;
    height: 27px;
    flex: none;
    padding: 0 1px 0 10px;
    border-top: 1px solid #c8c6c4;
    font-size: 12px;
  }

  .modes {
    display: flex;
    height: 26px;
  }

  .modes button {
    display: grid;
    place-items: center;
    width: 50px;
  }

  .modes .on {
    background: #d2d0ce;
  }

  /* taskbar */
  .taskbar {
    display: flex;
    height: 50px;
    flex: none;
    background: linear-gradient(90deg, #173c4f, #264653 30%, #23475a 50%, #0d3448 62%, #0d3448);
    color: #fff;
    font-size: 14px;
  }

  .start {
    display: grid;
    place-items: center;
    width: 60px;
  }

  .search {
    display: flex;
    align-items: center;
    gap: 14px;
    width: 430px;
    padding-left: 15px;
    background: #f3f3f6;
    border: 1px solid #c6c6c8;
    color: #333;
    font-size: 18px;
  }

  .search input {
    flex: 1;
  }

  .pin {
    display: grid;
    place-items: center;
    width: 60px;
  }

  .task {
    display: flex;
    align-items: center;
    gap: 5px;
    width: 146px;
    padding: 0 0 0 7px;
    margin: 0 7px;
    border-bottom: 3px solid #9cc8ee;
    white-space: nowrap;
  }

  .pc {
    width: 54px;
  }

  .outlook {
    padding-left: 5px;
    margin: 0 5px 0 4px;
  }

  .current {
    width: 156px;
    margin: 0;
    padding-left: 10px;
    background: #04558f;
  }

  .tray {
    display: flex;
    flex: 1;
    align-items: center;
    justify-content: flex-end;
    gap: 21px;
    padding-right: 16px;
  }

  .temp {
    margin: 0 8px 0 -8px;
    font-size: 16px;
  }

  .clock {
    line-height: 22px;
    text-align: center;
  }

  .notes {
    position: relative;
    width: 34px;
  }

  .notes b {
    position: absolute;
    left: 8px;
    top: 9px;
    width: 24px;
    height: 20px;
    border: 1px solid #7f9aa8;
    border-radius: 10px;
    background: #0b4f86;
    font-size: 13px;
    line-height: 18px;
    text-align: center;
  }
</style>
